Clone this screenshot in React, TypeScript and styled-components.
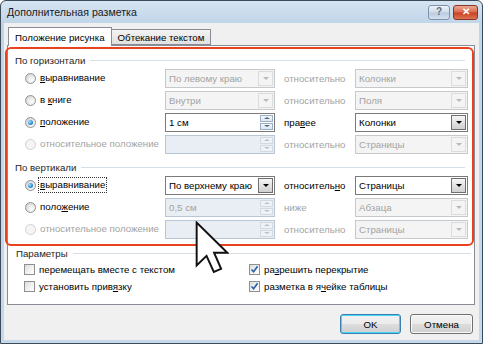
import React from 'react';
import styled, { createGlobalStyle } from 'styled-components';

const GlobalStyle = createGlobalStyle`
  html, body { margin: 0; padding: 0; background: #fff; }
  body { font-family: "Liberation Sans", Arial, sans-serif; font-size: 9.7px; color: #000; }
  * { box-sizing: border-box; }
`;

const Window = styled.div`
  position: relative;
  width: 483px;
  height: 344px;
  border: 1px solid #3d4a58;
  border-radius: 6px 6px 0 0;
  background: linear-gradient(180deg, #d6e4f1 0px, #c0d5e8 22px, #c6d9ea 100%);
  display: flex;
  flex-direction: column;
  padding: 0 3px 3px 3px;
  overflow: hidden;
`;

const TitleBar = styled.div`
  height: 22px;
  display: flex;
  align-items: center;
  justify-content: space-between;
  padding: 0 1px 0 3px;
`;

const Title = styled.span`
  font-size: 10.6px;
  color: #1a1a1a;
`;

const CaptionButtons = styled.div`
  display: flex;
  gap: 3px;
`;

const CaptionBtn = styled.div<{ $close?: boolean }>`
  width: ${p => (p.$close ? 25 : 22)}px;
  height: 15px;
  border-radius: 3px;
  border: 1px solid ${p => (p.$close ? '#8d3322' : '#7e93ab')};
  background: ${p =>
    p.$close
      ? 'linear-gradient(180deg, #eaa894 0%, #d9684c 48%, #c8401f 52%, #dc7456 100%)'
      : 'linear-gradient(180deg, #eef4fa 0%, #cfdcea 48%, #b9cbde 52%, #d5e2ef 100%)'};
  display: flex;
  align-items: center;
  justify-content: center;
  color: ${p => (p.$close ? '#fff' : '#5d6f86')};
  font-weight: bold;
  font-size: 10px;
  line-height: 1;
`;

const Client = styled.div`
  flex: 1;
  background: #f0f0f0;
  padding: 4px 4px 0 3px;
  display: flex;
  flex-direction: column;
`;

const TabStrip = styled.div`
  height: 18px;
  display: flex;
  align-items: flex-end;
  margin-left: 1px;
`;

const Tab = styled.div<{ $active?: boolean }>`
  position: relative;
  z-index: ${p => (p.$active ? 2 : 1)};
  height: ${p => (p.$active ? 19 : 16)}px;
  margin-bottom: ${p => (p.$active ? -1 : 0)}px;
  padding: 0 6px;
  display: flex;
  align-items: center;
  border: 1px solid #898c95;
  border-bottom: ${p => (p.$active ? 'none' : '1px solid #898c95')};
  border-left: ${p => (p.$active ? '1px solid #898c95' : 'none')};
  background: ${p => (p.$active ? '#fff' : 'linear-gradient(180deg, #f3f3f3, #e1e1e1)')};
  white-space: nowrap;
`;

const Panel = styled.div`
  height: 260px;
  background: #fff;
  border: 1px solid #898c95;
  display: flex;
  flex-direction: column;
`;

const Highlight = styled.div`
  margin: 1px 0 0 -3px;
  border: 2px solid #e8411b;
  border-radius: 6px;
  padding: 4px 4px 4px 0;
`;

const GroupHeader = styled.div<{ $gap?: number }>`
  height: 14px;
  margin-top: ${p => p.$gap ?? 0}px;
  padding-left: 8px;
  display: flex;
  align-items: center;
  gap: 5px;
  color: #1e1e1e;
  &::after {
    content: '';
    flex: 1;
    height: 1px;
    margin-right: 3px;
    background: #d5dfe5;
  }
`;

const Rows = styled.div`
  display: grid;
  grid-template-columns: 140px 110px 80px 113px;
  grid-auto-rows: 22px;
  align-items: center;
  padding-left: 18px;
`;

const Choice = styled.label<{ $disabled?: boolean }>`
  display: flex;
  align-items: center;
  gap: 3px;
  color: ${p => (p.$disabled ? '#a3a3a3' : '#000')};
  white-space: nowrap;
`;

const ChoiceText = styled.span<{ $focus?: boolean }>`
  padding: 0 1px;
  outline: ${p => (p.$focus ? '1px dotted #333' : 'none')};
  line-height: 14px;
`;

const Radio = styled.span<{ $checked?: boolean; $disabled?: boolean }>`
  width: 11px;
  height: 11px;
  border-radius: 50%;
  flex: none;
  border: 1px solid ${p => (p.$disabled ? '#cfd2d5' : '#8f9396')};
  background: ${p =>
    p.$disabled
      ? '#f5f5f5'
      : 'radial-gradient(circle at 65% 65%, #ffffff 0%, #e9e9e9 45%, #c9c9c9 100%)'};
  display: flex;
  align-items: center;
  justify-content: center;
  &::after {
    content: '';
    display: ${p => (p.$checked ? 'block' : 'none')};
    width: 5px;
    height: 5px;
    border-radius: 50%;
    background: radial-gradient(circle at 35% 35%, #a9e2ff 0%, #3b97d6 50%, #145b96 100%);
  }
`;

const Rel = styled.span<{ $disabled?: boolean }>`
  padding-left: 9px;
  color: ${p => (p.$disabled ? '#a3a3a3' : '#000')};
  white-space: nowrap;
`;

const Field = styled.div<{ $disabled?: boolean; $spin?: boolean }>`
  height: 19px;
  display: flex;
  align-items: stretch;
  border: 1px solid ${p => (p.$disabled ? (p.$spin ? '#b9c6d3' : '#c6c9cc') : '#7a7a7a')};
  background: ${p => (p.$disabled ? (p.$spin ? '#e9eef4' : '#f4f4f4') : '#fff')};
  color: ${p => (p.$disabled ? '#a3a3a3' : '#000')};
`;

const FieldText = styled.span`
  flex: 1;
  padding-left: 3px;
  display: flex;
  align-items: center;
  white-space: nowrap;
  overflow: hidden;
`;

const DropBtn = styled.span<{ $disabled?: boolean }>`
  width: 15px;
  margin: 1px;
  border: 1px solid ${p => (p.$disabled ? '#dcdcdc' : '#6f6f6f')};
  background: ${p =>
    p.$disabled ? '#f4f4f4' : 'linear-gradient(180deg, #f6f6f6 0%, #e2e2e2 50%, #cfcfcf 100%)'};
  display: flex;
  align-items: center;
  justify-content: center;
  &::after {
    content: '';
    border-left: 3px solid transparent;
    border-right: 3px solid transparent;
    border-top: 3px solid ${p => (p.$disabled ? '#b9b9b9' : '#000')};
  }
`;

const SpinBtns = styled.span`
  width: 13px;
  margin: 1px;
  display: flex;
  flex-direction: column;
  gap: 1px;
`;

const SpinHalf = styled.span<{ $down?: boolean; $disabled?: boolean }>`
  flex: 1;
  border: 1px solid ${p => (p.$disabled ? '#d2d9e0' : '#9bb0c6')};
  background: ${p => (p.$disabled ? '#eef2f6' : 'linear-gradient(180deg, #f4f8fc, #dbe6f1)')};
  display: flex;
  align-items: center;
  justify-content: center;
  &::after {
    content: '';
    border-left: 3px solid transparent;
    border-right: 3px solid transparent;
    ${p => (p.$down ? 'border-top' : 'border-bottom')}: 2px solid ${p => (p.$disabled ? '#b8c2cc' : '#55677b')};
  }
`;

const Options = styled.div`
  display: grid;
  grid-template-columns: 225px 1fr;
  grid-auto-rows: 17px;
  align-items: center;
  padding-left: 16px;
  margin-top: 1px;
`;

const Check = styled.span<{ $checked?: boolean }>`
  width: 11px;
  height: 11px;
  flex: none;
  border: 1px solid #8f8f8f;
  background: linear-gradient(135deg, #dcdcdc 0%, #f4f4f4 60%, #ffffff 100%);
  display: flex;
  align-items: center;
  justify-content: center;
`;

const Buttons = styled.div`
  display: flex;
  justify-content: flex-end;
  gap: 9px;
  padding: 9px 2px 0 0;
`;

const Button = styled.div<{ $w: number; $default?: boolean }>`
  width: ${p => p.$w}px;
  height: 20px;
  border-radius: 3px;
  border: 1px solid ${p => (p.$default ? '#3c7fb1' : '#707070')};
  box-shadow: ${p => (p.$default ? 'inset 0 0 0 1px #48d4f8' : 'inset 0 0 0 1px #fbfbfb')};
  background: linear-gradient(180deg, #f2f2f2 0%, #ebebeb 50%, #dddddd 51%, #cfcfcf 100%);
  display: flex;
  align-items: center;
  justify-content: center;
`;

const Cursor = styled.svg`
  position: absolute;
  left: 194px;
  top: 220px;
  z-index: 10;
`;

const U = styled.span`
  text-decoration: underline;
  text-underline-offset: 1px;
`;

type ComboProps = { text?: string; disabled?: boolean };
const Combo = ({ text = '', disabled }: ComboProps) => (
  <Field $disabled={disabled}>
    <FieldText>{text}</FieldText>
    <DropBtn $disabled={disabled} />
  </Field>
);

const Spinner = ({ text = '', disabled }: ComboProps) => (
  <Field $disabled={disabled} $spin>
    <FieldText>{text}</FieldText>
    <SpinBtns>
      <SpinHalf $disabled={disabled} />
      <SpinHalf $down $disabled={disabled} />
    </SpinBtns>
  </Field>
);

const CheckMark = () => (
  <svg width="9" height="9" viewBox="0 0 9 9">
    <path d="M1.5 4.5 L3.6 6.8 L7.6 1.2" fill="none" stroke="#2a5fa8" strokeWidth="1.6" />
  </svg>
);

export default function App() {
  return (
    <>
      <GlobalStyle />
      <Window>
        <TitleBar>
          <Title>Дополнительная разметка</Title>
          <CaptionButtons>
            <CaptionBtn>?</CaptionBtn>
            <CaptionBtn $close>✕</CaptionBtn>
          </CaptionButtons>
        </TitleBar>
        <Client>
          <TabStrip>
            <Tab $active>Положение рисунка</Tab>
            <Tab>Обтекание текстом</Tab>
          </TabStrip>
          <Panel>
            <Highlight>
              <GroupHeader>По горизонтали</GroupHeader>
              <Rows>
                <Choice>
                  <Radio />
                  <ChoiceText><U>в</U>ыравнивание</ChoiceText>
                </Choice>
                <Combo text="По левому краю" disabled />
                <Rel $disabled>относительно</Rel>
                <Combo text="Колонки" disabled />

                <Choice>
                  <Radio />
                  <ChoiceText>в <U>к</U>ниге</ChoiceText>
                </Choice>
                <Combo text="Внутри" disabled />
                <Rel $disabled>относительно</Rel>
                <Combo text="Поля" disabled />

                <Choice>
                  <Radio $checked />
                  <ChoiceText><U>п</U>оложение</ChoiceText>
                </Choice>
                <Spinner text="1 см" />
                <Rel>пра<U>в</U>ее</Rel>
                <Combo text="Колонки" />

                <Choice $disabled>
                  <Radio $disabled />
                  <ChoiceText>относительное положение</ChoiceText>
                </Choice>
                <Spinner disabled />
                <Rel $disabled>относительно</Rel>
                <Combo text="Страницы" disabled />
              </Rows>

              <GroupHeader $gap={5}>По вертикали</GroupHeader>
              <Rows>
                <Choice>
                  <Radio $checked />
                  <ChoiceText $focus><U>в</U>ыравнивание</ChoiceText>
                </Choice>
                <Combo text="По верхнему краю" />
                <Rel>относитель<U>н</U>о</Rel>
                <Combo text="Страницы" />

                <Choice>
                  <Radio />
                  <ChoiceText>поло<U>ж</U>ение</ChoiceText>
                </Choice>
                <Spinner text="0,5 см" disabled />
                <Rel $disabled>ниже</Rel>
                <Combo text="Абзаца" disabled />

                <Choice $disabled>
                  <Radio $disabled />
                  <ChoiceText>относительное положение</ChoiceText>
                </Choice>
                <Spinner disabled />
                <Rel $disabled>относительно</Rel>
                <Combo text="Страницы" disabled />
              </Rows>
            </Highlight>

            <GroupHeader>Параметры</GroupHeader>
            <Options>
              <Choice>
                <Check />
                <ChoiceText>перемещать вместе с текстом</ChoiceText>
              </Choice>
              <Choice>
                <Check $checked><CheckMark /></Check>
                <ChoiceText>ра<U>з</U>решить перекрытие</ChoiceText>
              </Choice>
              <Choice>
                <Check />
                <ChoiceText>установить прив<U>я</U>зку</ChoiceText>
              </Choice>
              <Choice>
                <Check $checked><CheckMark /></Check>
                <ChoiceText>разметка в я<U>ч</U>ейке таблицы</ChoiceText>
              </Choice>
            </Options>
          </Panel>
          <Buttons>
            <Button $w={61} $default>OK</Button>
            <Button $w={63}>Отмена</Button>
          </Buttons>
        </Client>
        <Cursor width="34" height="52" viewBox="-0.6 -0.6 13 20">
          <path
            d="M0 0 L0 16.5 L3.8 12.8 L6.6 19 L9.4 17.8 L6.7 11.6 L11.8 11.6 Z"
            fill="#fff"
            stroke="#111"
            strokeWidth="0.75"
            strokeLinejoin="miter"
          />
        </Cursor>
      </Window>
    </>
  );
}
